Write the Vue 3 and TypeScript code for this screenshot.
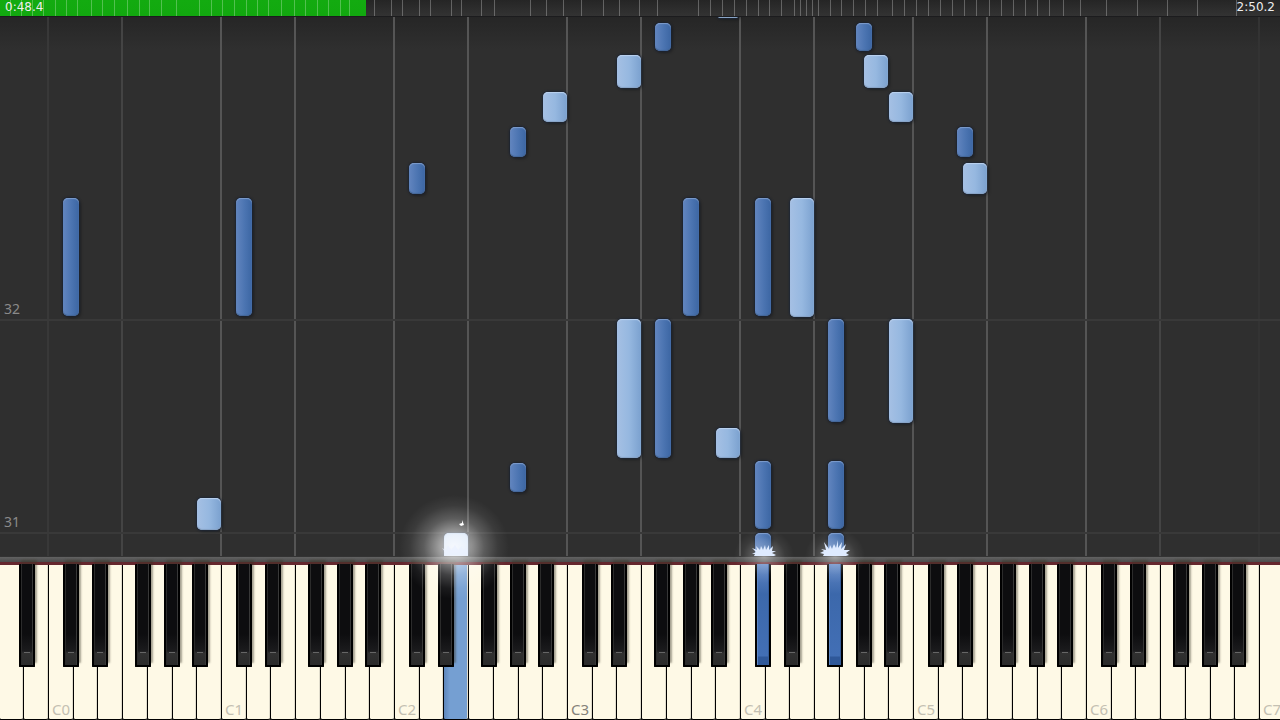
<script setup lang="ts">
import { ref } from 'vue'

interface Note { octave: number; step: number; bottom: number; length: number; lit?: boolean }
interface Key { name: string; left: number; lit: boolean; label?: string; strong?: boolean }

const SPAN = 1280
const OCTAVE = 173
const FIRST_C = 48
const WHITE = OCTAVE / 7
const BLACK_OFFSETS: Record<number, number> = { 1: 15, 3: 44, 6: 87, 8: 116, 10: 144 }
const WHITE_STEPS = [0, 2, 4, 5, 7, 9, 11]
const NAMES = ['C', 'C sharp', 'D', 'D sharp', 'E', 'F', 'F sharp', 'G', 'G sharp', 'A', 'A sharp', 'B']

const pct = (v: number): string => `${(v / SPAN) * 100}%`
const isBlack = (step: number): boolean => step in BLACK_OFFSETS
const stepLeft = (octave: number, step: number): number =>
  FIRST_C + octave * OCTAVE +
  (isBlack(step) ? BLACK_OFFSETS[step] : Math.round(WHITE_STEPS.indexOf(step) * WHITE + 0.5))

const notes: Note[] = [
  { octave: 0, step: 1, bottom: 240, length: 118 },
  { octave: 1, step: 1, bottom: 240, length: 118 },
  { octave: 0, step: 11, bottom: 26, length: 32 },
  { octave: 2, step: 1, bottom: 362, length: 31 },
  { octave: 2, step: 8, bottom: 399, length: 30 },
  { octave: 2, step: 8, bottom: 64, length: 29 },
  { octave: 2, step: 11, bottom: 434, length: 30 },
  { octave: 3, step: 4, bottom: 468, length: 33 },
  { octave: 3, step: 4, bottom: 98, length: 139 },
  { octave: 3, step: 6, bottom: 505, length: 28 },
  { octave: 3, step: 6, bottom: 98, length: 139 },
  { octave: 3, step: 8, bottom: 240, length: 118 },
  { octave: 3, step: 11, bottom: 98, length: 30 },
  { octave: 3, step: 11, bottom: 538, length: 30 },
  { octave: 4, step: 1, bottom: 240, length: 118 },
  { octave: 4, step: 1, bottom: 27, length: 68 },
  { octave: 4, step: 1, bottom: -8, length: 31 },
  { octave: 4, step: 4, bottom: 239, length: 119 },
  { octave: 4, step: 6, bottom: 134, length: 103 },
  { octave: 4, step: 6, bottom: 27, length: 68 },
  { octave: 4, step: 6, bottom: -8, length: 31 },
  { octave: 4, step: 8, bottom: 505, length: 28 },
  { octave: 4, step: 9, bottom: 468, length: 33 },
  { octave: 4, step: 11, bottom: 434, length: 30 },
  { octave: 4, step: 11, bottom: 133, length: 104 },
  { octave: 5, step: 3, bottom: 399, length: 30 },
  { octave: 5, step: 4, bottom: 362, length: 31 },
  { octave: 2, step: 4, bottom: -8, length: 31, lit: true },
]

const octaves = [0, 1, 2, 3, 4, 5, 6, 7]
const guides = octaves
  .flatMap((o) => [FIRST_C + o * OCTAVE, FIRST_C + o * OCTAVE + 74])
  .filter((x) => x < SPAN)
  .map((x, i, all) => ({
    x: x - 1,
    tone: i === 0 ? 'faint' : i === all.length - 1 ? 'ghost' : i === 1 || i === all.length - 2 ? 'dim' : 'plain',
  }))

const measures = [{ label: '32', bottom: 235 }, { label: '31', bottom: 22 }]

const litKeys = ['2-4', '4-1', '4-6']
const whiteKeys: Key[] = Array.from({ length: 52 }, (_, i) => {
  const n = i + 5
  const octave = Math.floor(n / 7) - 1
  const step = WHITE_STEPS[n % 7]
  return {
    name: `${NAMES[step]} ${octave}`,
    left: 0,
    lit: litKeys.includes(`${octave}-${step}`),
    label: step === 0 ? `C${octave}` : undefined,
    strong: octave === 3,
  }
})
const blackKeys: Key[] = [-1, 0, 1, 2, 3, 4, 5, 6].flatMap((octave) =>
  Object.keys(BLACK_OFFSETS).map(Number).map((step) => ({
    name: `${NAMES[step]} ${octave}`,
    left: stepLeft(octave, step),
    lit: litKeys.includes(`${octave}-${step}`),
  })),
).filter((k) => k.left > 0)

const ticks = [
  10, 21, 32, 43, 55, 66, 77, 91, 102, 114, 127, 139, 149, 161, 176, 199, 211, 222, 234, 246, 257, 268, 281, 294, 305,
  317, 328, 340, 349, 374, 391, 402, 419, 430, 451, 461, 481, 494, 530, 546, 563, 581, 603, 619, 639, 657, 698, 710,
  722, 734, 746, 758, 769, 781, 794, 800, 806, 812, 818, 830, 841, 853, 865, 877, 892, 904, 916, 928, 940, 952, 964,
  976, 989, 1001, 1013, 1025, 1037, 1049, 1063, 1080, 1106, 1137, 1167, 1197, 1236,
]

const sparks = [
  {
    x: 764,
    width: 24,
    height: 12,
    d: 'M2 12 L3 10 L0 10 L4 8 L0 4 L5 6 L4 2 L8 6 L9 2 L11 6 L13 1 L14 6 L17 1 L17 6 L21 2 L20 7 L24 7 L20 9 L24 11 L22 12 Z',
  },
  {
    x: 835,
    width: 30,
    height: 16,
    d: 'M3 16 L4 14 L0 13 L4 11 L1 9 L6 10 L4 2 L9 9 L10 5 L12 9 L14 4 L16 8 L18 0 L18 8 L22 2 L21 9 L26 4 L24 10 L30 10 L26 13 L29 15 L26 16 Z',
  },
]
const played = ref(366)
</script>

<template>
  <main class="player">
    <header class="timeline">
      <div class="played" :style="{ width: pct(played) }"></div>
      <i v-for="t in ticks" :key="t" class="tick" :style="{ left: pct(t) }"></i>
      <input v-model.number="played" class="seek" type="range" min="0" :max="SPAN" aria-label="Song position" />
      <span class="time">0:48.4</span>
      <span class="time">2:50.2</span>
    </header>

    <section class="roll" aria-label="Falling notes">
      <i v-for="g in guides" :key="g.x" class="guide" :class="g.tone" :style="{ left: pct(g.x) }"></i>
      <div v-for="m in measures" :key="m.label" class="measure" :style="{ bottom: `${m.bottom}px` }">{{ m.label }}</div>
      <div
        v-for="(n, i) in notes"
        :key="i"
        class="note"
        :class="{ sharp: isBlack(n.step), lit: n.lit }"
        :style="{
          left: pct(stepLeft(n.octave, n.step) + (n.step === 6 ? 1 : 0)),
          bottom: `${n.bottom}px`,
          height: `${n.length}px`,
        }"
      ></div>
    </section>

    <div class="rail"></div>

    <section class="keyboard" aria-label="Keyboard">
      <div class="whites">
        <button v-for="k in whiteKeys" :key="k.name" class="white" :class="{ lit: k.lit }" :aria-label="k.name">
          <span v-if="k.label" class="label" :class="{ strong: k.strong }">{{ k.label }}</span>
        </button>
      </div>
      <button
        v-for="k in blackKeys"
        :key="k.name"
        class="black"
        :class="{ lit: k.lit }"
        :style="{ left: pct(k.left) }"
        :aria-label="k.name"
      ></button>
      <div class="glow big" :style="{ left: pct(456) }"></div>
      <svg class="fleck" :style="{ left: pct(456) }" viewBox="0 0 28 36" aria-hidden="true">
        <path d="M17 4 L20 3 L20 0 L22 5 L19 6 Z" fill="#fff" />
        <path d="M2 35 L3 32 L0 28 L4 30 L6 25 L9 30 L13 25 L16 30 L20 26 L21 30 L25 28 L26 35 Z" fill="#e9f1ff" opacity="0.7" />
      </svg>
      <template v-for="s in sparks" :key="s.x">
        <div class="glow" :style="{ left: pct(s.x) }"></div>
        <svg
          class="spark"
          :style="{ left: pct(s.x) }"
          :width="s.width"
          :height="s.height"
          :viewBox="`0 0 ${s.width} ${s.height}`"
          aria-hidden="true"
        >
          <path :d="s.d" fill="#dfebff" />
        </svg>
      </template>
    </section>
  </main>
</template>

<style>
body {
  margin: 0;
  background: #2f2f2f;
}
</style>

<style scoped>
.player {
  display: flex;
  flex-direction: column;
  height: 100vh;
  min-height: 480px;
  overflow: hidden;
  font-family: "Noto Sans", "Open Sans", sans-serif;
}
.timeline {
  position: relative;
  display: flex;
  justify-content: space-between;
  flex: none;
  height: 16px;
  padding: 0 5px;
  background: linear-gradient(#252525, #333);
  border-bottom: 1px solid #1c1c1e;
}
.played {
  position: absolute;
  inset: 0 auto 0 0;
  background: linear-gradient(#13ab10, #12a80f);
}
.tick {
  position: absolute;
  top: 0;
  bottom: 0;
  width: 1px;
  background: rgba(255, 255, 255, 0.27);
}
.seek {
  position: absolute;
  inset: 0;
  width: 100%;
  height: 100%;
  margin: 0;
  opacity: 0;
  cursor: pointer;
}
.time {
  position: relative;
  font: 12px/15px "DejaVu Sans", sans-serif;
  color: #eee;
  pointer-events: none;
}
.roll {
  position: relative;
  flex: 1;
  overflow: hidden;
  background: linear-gradient(#262626, #2f2f2f 32px);
}
.guide {
  position: absolute;
  top: 0;
  bottom: 0;
  width: 2px;
  background: #555;
}
.guide.dim { background: #444; }
.guide.faint { background: #383838; }
.guide.ghost { background: #333; }
.measure {
  position: absolute;
  left: 0;
  right: 0;
  padding-left: 4px;
  border-bottom: 2px solid #393939;
  font-size: 14px;
  line-height: 20px;
  color: #8a8a8a;
}
.note {
  position: absolute;
  box-sizing: border-box;
  width: 24px;
  border-radius: 5px;
  background: linear-gradient(90deg, #a5c0e4, #96b8e0 50%, #7ba1cf);
  box-shadow: 0 0 2px 1px #1d2636, 2px 2px 3px rgba(0, 0, 0, 0.25), inset 0 1px 1px #bcd3f0, inset 0 -1px 1px #88a3c6;
}
.note.sharp {
  width: 16px;
  background: linear-gradient(90deg, #6285bf, #4b74b1 55%, #3c66a3);
  box-shadow: 0 0 2px 1px #1b2230, 2px 2px 3px rgba(0, 0, 0, 0.25), inset 0 1px 1px #7e9dcd, inset 0 -1px 1px #446797;
}
.note.lit {
  background: #cfe0f7;
}
.rail {
  flex: none;
  height: 5px;
  border-top: 1px solid #333;
  border-bottom: 3px solid #65272e;
  background: linear-gradient(#626262, #4b4b4b);
}
.keyboard {
  position: relative;
  flex: none;
  height: 155px;
}
.whites {
  display: grid;
  grid-template-columns: repeat(52, 1fr);
  width: 100.4%;
  height: 100%;
  margin-left: -0.11%;
}
.white {
  display: flex;
  align-items: flex-end;
  min-width: 0;
  padding: 0 0 0 3px;
  border: 0;
  border-left: 1px solid #000;
  border-bottom: 1px solid #000;
  border-radius: 0 0 2px 2px;
  background: #fef9e6;
  box-shadow: inset -1px 0 #e0dccc;
  font-family: inherit;
}
.white.lit {
  background: linear-gradient(90deg, #5d86bb, #759fd2 25%, #759fd2);
}
.label {
  font-size: 15px;
  line-height: 20px;
  color: #c4c0b2;
}
.label.strong {
  color: #85827a;
}
.black {
  position: absolute;
  top: -1px;
  width: 16px;
  height: 103px;
  padding: 0;
  border: 2px solid #000;
  border-top: 0;
  border-radius: 1px;
  background:
    linear-gradient(90deg, transparent 3px, #666 3px 9px, transparent 9px) 0 88px / 100% 1px no-repeat,
    linear-gradient(90deg, #2b2b2b 1px, transparent 1px 11px, #383838 11px),
    linear-gradient(#0d0d0f 0 70px, #1b1b1d 87px, #303030 89px, #2b2b2b);
  box-shadow: 2px -4px 2px rgba(60, 55, 40, 0.45);
}
.black.lit {
  background:
    linear-gradient(90deg, #5b85c4 1px, transparent 1px 11px, #355c98 11px),
    linear-gradient(#5f86c4, #3c68ab 30px, #426fb5 92px, #2f5899 93px);
  box-shadow: none;
}
.glow {
  position: absolute;
  top: -36px;
  width: 60px;
  height: 54px;
  margin-left: -30px;
  background: radial-gradient(
    closest-side,
    rgba(255, 255, 255, 0.45),
    rgba(255, 255, 255, 0.22) 35%,
    rgba(255, 255, 255, 0.06) 70%,
    transparent
  );
  pointer-events: none;
}
.glow.big {
  top: -70px;
  width: 110px;
  height: 104px;
  margin-left: -57px;
  background: radial-gradient(
    closest-side,
    rgba(255, 255, 255, 0.8),
    rgba(255, 255, 255, 0.55) 25%,
    rgba(255, 255, 255, 0.22) 55%,
    rgba(255, 255, 255, 0.06) 80%,
    transparent
  );
}
.spark,
.fleck {
  position: absolute;
  pointer-events: none;
}
.spark {
  bottom: 164px;
  transform: translateX(-50%);
}
.fleck {
  top: -45px;
  width: 28px;
  height: 36px;
  margin-left: -14px;
}
</style>
